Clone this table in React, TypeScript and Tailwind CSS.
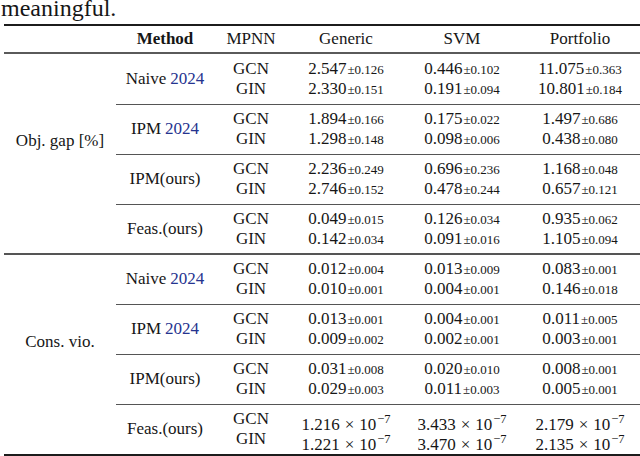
type Cell = [string, string] | [string, "exp"];

type Block = {
  method: string;
  cite?: boolean;
  rows: { mpnn: string; cells: Cell[] }[];
};

type Section = { label: string; blocks: Block[] };

const sections: Section[] = [
  {
    label: "Obj. gap [%]",
    blocks: [
      {
        method: "Naive",
        cite: true,
        rows: [
          { mpnn: "GCN", cells: [["2.547", "0.126"], ["0.446", "0.102"], ["11.075", "0.363"]] },
          { mpnn: "GIN", cells: [["2.330", "0.151"], ["0.191", "0.094"], ["10.801", "0.184"]] },
        ],
      },
      {
        method: "IPM",
        cite: true,
        rows: [
          { mpnn: "GCN", cells: [["1.894", "0.166"], ["0.175", "0.022"], ["1.497", "0.686"]] },
          { mpnn: "GIN", cells: [["1.298", "0.148"], ["0.098", "0.006"], ["0.438", "0.080"]] },
        ],
      },
      {
        method: "IPM(ours)",
        rows: [
          { mpnn: "GCN", cells: [["2.236", "0.249"], ["0.696", "0.236"], ["1.168", "0.048"]] },
          { mpnn: "GIN", cells: [["2.746", "0.152"], ["0.478", "0.244"], ["0.657", "0.121"]] },
        ],
      },
      {
        method: "Feas.(ours)",
        rows: [
          { mpnn: "GCN", cells: [["0.049", "0.015"], ["0.126", "0.034"], ["0.935", "0.062"]] },
          { mpnn: "GIN", cells: [["0.142", "0.034"], ["0.091", "0.016"], ["1.105", "0.094"]] },
        ],
      },
    ],
  },
  {
    label: "Cons. vio.",
    blocks: [
      {
        method: "Naive",
        cite: true,
        rows: [
          { mpnn: "GCN", cells: [["0.012", "0.004"], ["0.013", "0.009"], ["0.083", "0.001"]] },
          { mpnn: "GIN", cells: [["0.010", "0.001"], ["0.004", "0.001"], ["0.146", "0.018"]] },
        ],
      },
      {
        method: "IPM",
        cite: true,
        rows: [
          { mpnn: "GCN", cells: [["0.013", "0.001"], ["0.004", "0.001"], ["0.011", "0.005"]] },
          { mpnn: "GIN", cells: [["0.009", "0.002"], ["0.002", "0.001"], ["0.003", "0.001"]] },
        ],
      },
      {
        method: "IPM(ours)",
        rows: [
          { mpnn: "GCN", cells: [["0.031", "0.008"], ["0.020", "0.010"], ["0.008", "0.001"]] },
          { mpnn: "GIN", cells: [["0.029", "0.003"], ["0.011", "0.003"], ["0.005", "0.001"]] },
        ],
      },
      {
        method: "Feas.(ours)",
        rows: [
          { mpnn: "GCN", cells: [["1.216", "exp"], ["3.433", "exp"], ["2.179", "exp"]] },
          { mpnn: "GIN", cells: [["1.221", "exp"], ["3.470", "exp"], ["2.135", "exp"]] },
        ],
      },
    ],
  },
];

const valueCols = ["w-[116px]", "w-[116px]", "w-[120px]"];

function Value({ cell }: { cell: Cell }) {
  if (cell[1] === "exp") {
    return (
      <span className="whitespace-nowrap">
        {cell[0]}
        <span className="mx-[5px]">×</span>
        10
        <span className="text-[12.5px] align-[7px] ml-[1px]">−7</span>
      </span>
    );
  }
  return (
    <span className="whitespace-nowrap">
      {cell[0]}
      <span className="text-[13px] ml-[1px]">±{cell[1]}</span>
    </span>
  );
}

export default function App() {
  return (
    <div className="w-[640px] h-[456px] overflow-hidden bg-white text-[#161616] font-['Liberation_Serif',serif]">
      <div className="h-[24px] overflow-hidden">
        <div className="text-[24px] leading-[24px] -mt-[4px] pl-[1px]">meaningful.</div>
      </div>
      <div className="ml-[4px] w-[636px] text-[17px]">
        <div className="h-[2px] bg-[#1c1c1c]" />
        <div className="flex h-[26px] items-center text-center">
          <div className="w-[112px]" />
          <div className="w-[98px] font-bold">Method</div>
          <div className="w-[74px]">MPNN</div>
          <div className="w-[116px]">Generic</div>
          <div className="w-[116px]">SVM</div>
          <div className="w-[120px]">Portfolio</div>
        </div>
        <div className="h-[2px] bg-[#5a5a5a]" />
        {sections.map((sec, si) => (
          <div key={sec.label}>
            {si > 0 && <div className="h-[2px] bg-[#555]" />}
            <div className="flex">
              <div className="w-[112px] flex items-center justify-center pb-[26px]">{sec.label}</div>
              <div className="flex-1">
                {sec.blocks.map((b, bi) => {
                  const first = bi === 0;
                  const last = bi === sec.blocks.length - 1;
                  const pt = first ? (si === 0 ? "pt-[5px]" : "pt-[4px]") : "pt-[4px] border-t border-[#555]";
                  const pb = last && si === 0 ? "pb-[4px]" : "pb-[5px]";
                  return (
                    <div key={b.method} className={`flex ${pt} ${pb}`}>
                      <div className="w-[98px] flex items-center justify-center whitespace-nowrap">
                        {b.method}
                        {b.cite && <span className="ml-[4px] text-[#25338f]">2024</span>}
                      </div>
                      <div className="flex-1">
                        {b.rows.map((r) => (
                          <div key={r.mpnn} className="flex h-[20px] leading-[20px] text-center">
                            <div className="w-[74px]">{r.mpnn}</div>
                            {r.cells.map((c, ci) => (
                              <div key={ci} className={valueCols[ci]}>
                                <Value cell={c} />
                              </div>
                            ))}
                          </div>
                        ))}
                      </div>
                    </div>
                  );
                })}
              </div>
            </div>
          </div>
        ))}
        <div className="h-[2px] bg-[#1c1c1c]" />
      </div>
    </div>
  );
}
